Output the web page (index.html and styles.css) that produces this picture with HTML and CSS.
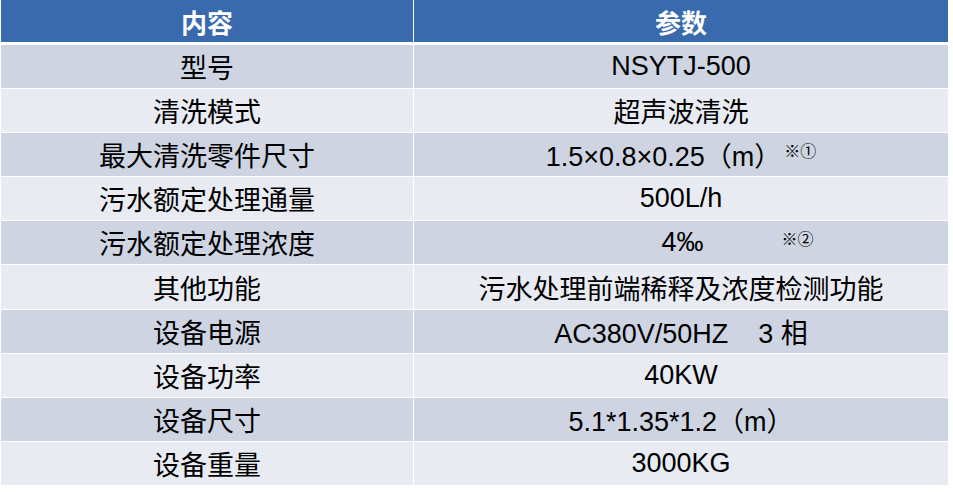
FILE: index.html
```html
<!DOCTYPE html>
<html lang="zh-CN">
<head>
<meta charset="utf-8">
<title>设备参数</title>
<link rel="stylesheet" href="styles.css">
</head>
<body>
<div class="sheet">
  <div class="head">
    <div class="hcell">内容</div>
    <div class="hcell">参数</div>
  </div>
  <div class="body">
    <div class="cell dark">型号</div><div class="cell dark">NSYTJ-500</div>
    <div class="cell light">清洗模式</div><div class="cell light">超声波清洗</div>
    <div class="cell dark">最大清洗零件尺寸</div><div class="cell dark"><span>1.5×0.8×0.25（m）</span><span class="note note1">※①</span></div>
    <div class="cell light">污水额定处理通量</div><div class="cell light">500L/h</div>
    <div class="cell dark">污水额定处理浓度</div><div class="cell dark"><span class="balance">4‰</span><span class="note note2">※②</span></div>
    <div class="cell light">其他功能</div><div class="cell light">污水处理前端稀释及浓度检测功能</div>
    <div class="cell dark">设备电源</div><div class="cell dark"><span class="pre">AC380V/50HZ    3 相</span></div>
    <div class="cell light">设备功率</div><div class="cell light">40KW</div>
    <div class="cell dark">设备尺寸</div><div class="cell dark">5.1*1.35*1.2（m）</div>
    <div class="cell light">设备重量</div><div class="cell light">3000KG</div>
  </div>
</div>
</body>
</html>
```

FILE: styles.css
```css
html, body {
  margin: 0;
  padding: 0;
  background: #ffffff;
}

body {
  font-family: "Liberation Sans", "Noto Sans CJK SC", sans-serif;
  color: #000000;
}

.sheet {
  width: 947px;
  margin-left: 1px;
  display: flex;
  flex-direction: column;
  gap: 3px;
}

.head {
  display: grid;
  grid-template-columns: 412px 534px;
  column-gap: 1px;
  height: 42px;
}

.hcell {
  background: #386aad;
  color: #ffffff;
  font-weight: bold;
  font-size: 26px;
  display: flex;
  align-items: center;
  justify-content: center;
  padding-top: 1px;
}

.body {
  display: grid;
  grid-template-columns: 412px 534px;
  grid-auto-rows: 43.1px;
  column-gap: 1px;
  row-gap: 1px;
}

.cell {
  font-size: 27px;
  display: flex;
  align-items: center;
  justify-content: center;
  white-space: nowrap;
}

.dark {
  background: #ced4e1;
}

.light {
  background: #e8ebf2;
}

.note {
  font-family: "Noto Sans CJK SC", sans-serif;
  font-size: 16px;
  position: relative;
  top: -5px;
}

.note1 {
  margin-left: 3px;
}

.balance {
  padding-left: 113px;
}

.note2 {
  margin-left: 78px;
}

.pre {
  white-space: pre;
}
```
